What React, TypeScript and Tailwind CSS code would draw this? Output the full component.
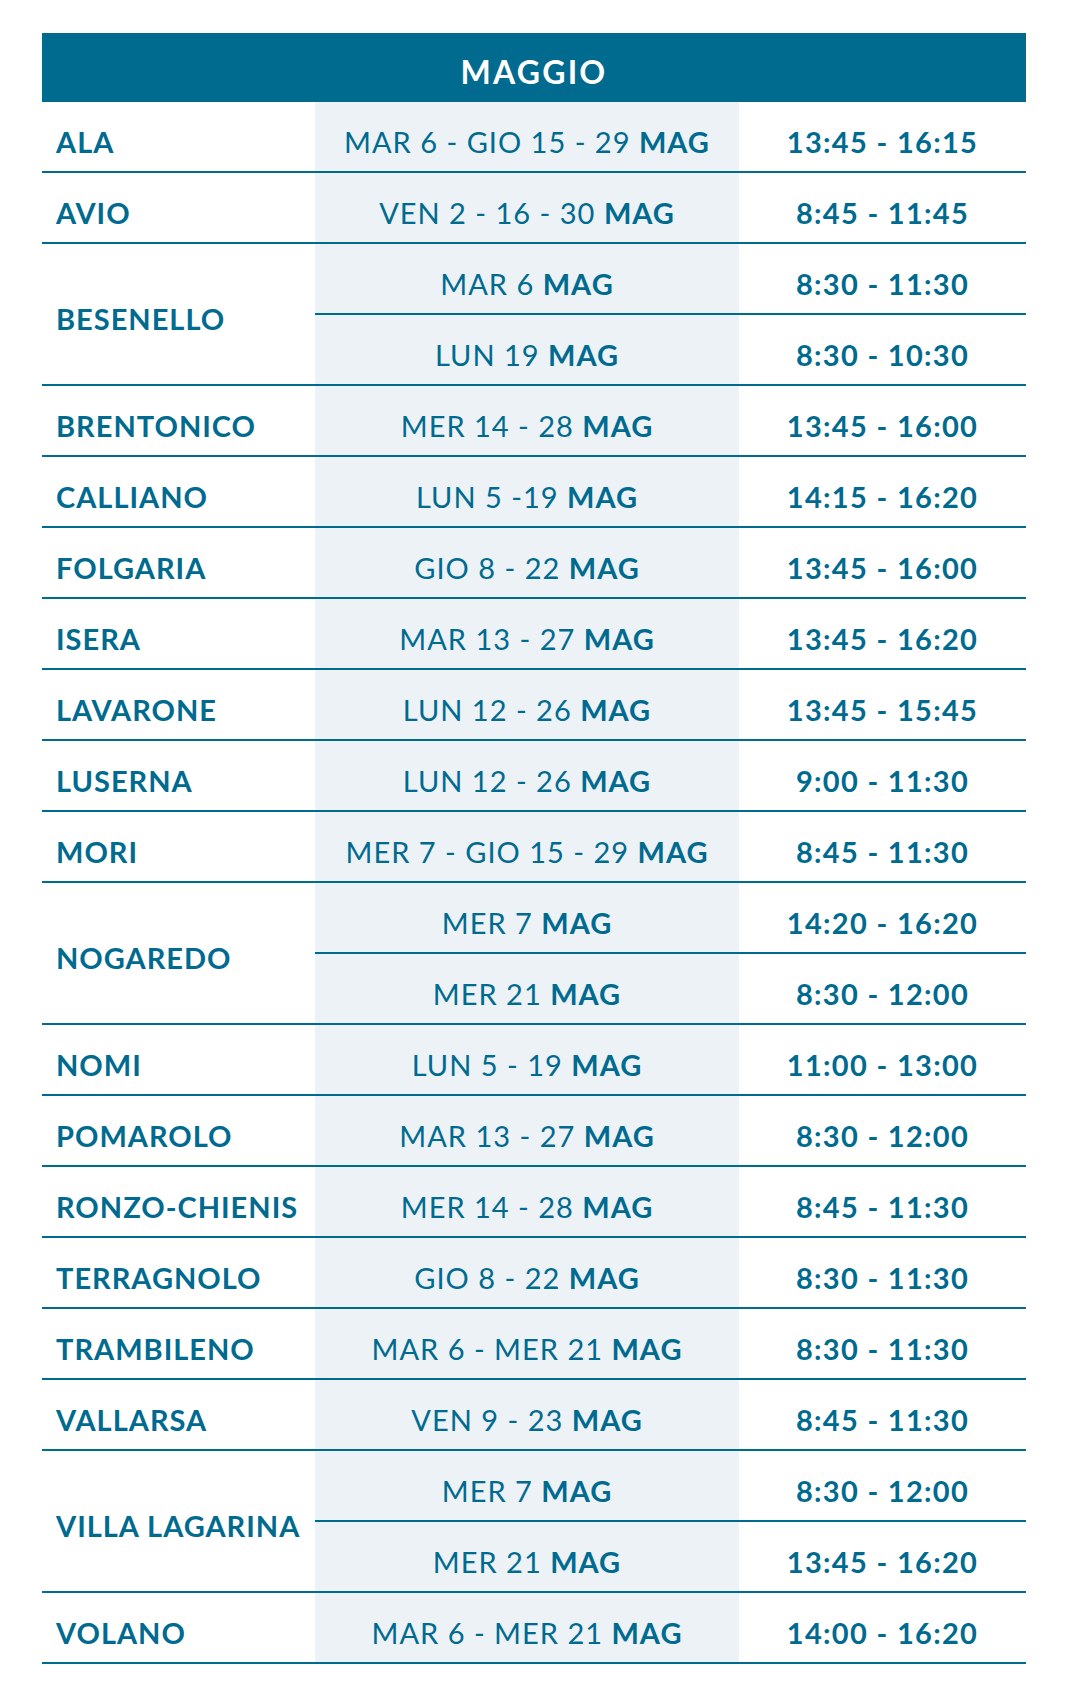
import React from "react";

type Sub = { date: string; time: string };
type Place = { name: string; subs: Sub[] };

const data: Place[] = [
  { name: "ALA", subs: [{ date: "MAR 6 - GIO 15 - 29", time: "13:45 - 16:15" }] },
  { name: "AVIO", subs: [{ date: "VEN 2 - 16 - 30", time: "8:45 - 11:45" }] },
  {
    name: "BESENELLO",
    subs: [
      { date: "MAR 6", time: "8:30 - 11:30" },
      { date: "LUN 19", time: "8:30 - 10:30" },
    ],
  },
  { name: "BRENTONICO", subs: [{ date: "MER 14 - 28", time: "13:45 - 16:00" }] },
  { name: "CALLIANO", subs: [{ date: "LUN 5 -19", time: "14:15 - 16:20" }] },
  { name: "FOLGARIA", subs: [{ date: "GIO 8 - 22", time: "13:45 - 16:00" }] },
  { name: "ISERA", subs: [{ date: "MAR 13 - 27", time: "13:45 - 16:20" }] },
  { name: "LAVARONE", subs: [{ date: "LUN 12 - 26", time: "13:45 - 15:45" }] },
  { name: "LUSERNA", subs: [{ date: "LUN 12 - 26", time: "9:00 - 11:30" }] },
  { name: "MORI", subs: [{ date: "MER 7 - GIO 15 - 29", time: "8:45 - 11:30" }] },
  {
    name: "NOGAREDO",
    subs: [
      { date: "MER 7", time: "14:20 - 16:20" },
      { date: "MER 21", time: "8:30 - 12:00" },
    ],
  },
  { name: "NOMI", subs: [{ date: "LUN 5 - 19", time: "11:00 - 13:00" }] },
  { name: "POMAROLO", subs: [{ date: "MAR 13 - 27", time: "8:30 - 12:00" }] },
  { name: "RONZO-CHIENIS", subs: [{ date: "MER 14 - 28", time: "8:45 - 11:30" }] },
  { name: "TERRAGNOLO", subs: [{ date: "GIO 8 - 22", time: "8:30 - 11:30" }] },
  { name: "TRAMBILENO", subs: [{ date: "MAR 6 - MER 21", time: "8:30 - 11:30" }] },
  { name: "VALLARSA", subs: [{ date: "VEN 9 - 23", time: "8:45 - 11:30" }] },
  {
    name: "VILLA LAGARINA",
    subs: [
      { date: "MER 7", time: "8:30 - 12:00" },
      { date: "MER 21", time: "13:45 - 16:20" },
    ],
  },
  { name: "VOLANO", subs: [{ date: "MAR 6 - MER 21", time: "14:00 - 16:20" }] },
];

export default function App() {
  return (
    <div
      className="w-[1069px] min-h-[1692px] bg-white pt-[33px] pl-[42px] text-[#006a8f]"
      style={{ fontFamily: "Lato, 'Noto Sans', sans-serif" }}
    >
      <div className="w-[984px]">
        <div className="h-[69px] bg-[#006a8f] flex items-center justify-center pt-[9px]">
          <span className="text-white text-[32px] font-bold leading-none tracking-[2.2px]">MAGGIO</span>
        </div>
        {data.map((p) => (
          <div key={p.name} className="flex border-b-2 border-[#006a8f]">
            <div className="w-[273px] flex items-center pl-[14px] pt-[9px]">
              <span className="text-[29px] font-bold leading-none whitespace-nowrap tracking-[1px]">{p.name}</span>
            </div>
            <div className="flex-1 flex flex-col">
              {p.subs.map((s, i) => (
                <div
                  key={i}
                  className={
                    "flex h-[69px] box-content " +
                    (i < p.subs.length - 1 ? "border-b-2 border-[#006a8f]" : "")
                  }
                >
                  <div className="w-[424px] bg-[#edf2f7] flex items-center justify-center pt-[9px]">
                    <span className="text-[29px] leading-none whitespace-nowrap tracking-[1px]">
                      {s.date} <span className="font-bold">MAG</span>
                    </span>
                  </div>
                  <div className="flex-1 flex items-center justify-center pt-[9px]">
                    <span className="text-[29px] font-bold leading-none whitespace-nowrap tracking-[1.3px]">{s.time}</span>
                  </div>
                </div>
              ))}
            </div>
          </div>
        ))}
      </div>
    </div>
  );
}
